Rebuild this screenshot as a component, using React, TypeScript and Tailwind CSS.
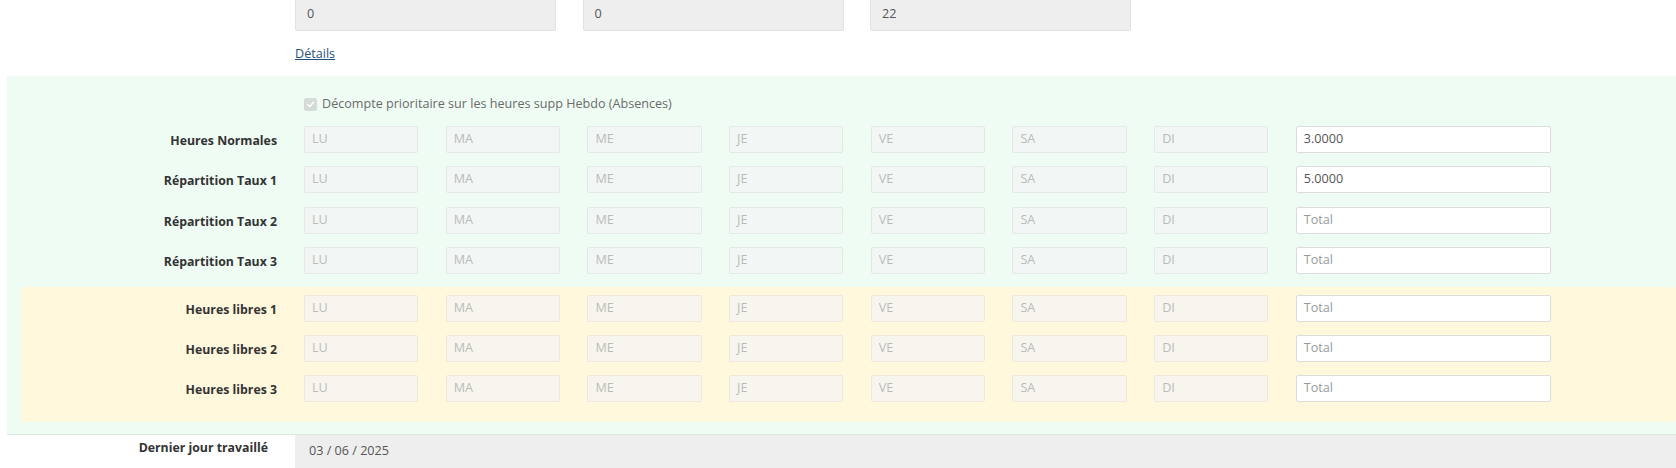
import React from "react";

const DAYS = ["LU", "MA", "ME", "JE", "VE", "SA", "DI"];

type RowProps = {
  label: string;
  total?: string;
  tone: "green" | "yellow";
  labelWidth: string;
};

function DayRow({ label, total, tone, labelWidth }: RowProps) {
  const dayCls =
    tone === "green"
      ? "bg-[#f2f6f4] border-[#e4e8e6]"
      : "bg-[#f8f5ee] border-[#ece8de]";
  return (
    <div className="flex items-center h-[27px]">
      <div
        className={`${labelWidth} shrink-0 pr-[27px] pt-[3px] text-right font-bold text-[12.3px] text-[#333] leading-none`}
      >
        {label}
      </div>
      <div className="flex gap-[27.4px]">
        {DAYS.map((d) => (
          <div
            key={d}
            className={`w-[114.3px] h-[27px] border rounded-[2px] ${dayCls} flex items-center pl-[7px] text-[12.6px] text-[#b9bcbb]`}
          >
            {d}
          </div>
        ))}
        <div className="w-[255px] h-[27px] border border-[#dcdcdc] rounded-[2px] bg-white flex items-center pl-[7px] text-[12.6px]">
          {total ? (
            <span className="text-[#555]">{total}</span>
          ) : (
            <span className="text-[#9a9a9a]">Total</span>
          )}
        </div>
      </div>
    </div>
  );
}

export default function App() {
  return (
    <div
      className="w-[1676px] h-[468px] overflow-hidden bg-white text-[#555]"
      style={{ fontFamily: '"Open Sans", "Noto Sans", sans-serif' }}
    >
      {/* counters row */}
      <div className="flex gap-[26.5px] pl-[295px] -mt-[3px]">
        {["0", "0", "22"].map((v, i) => (
          <div
            key={i}
            className="w-[261px] h-[34px] bg-[#eeeeee] border border-[#e2e2e2] rounded-[2px] flex items-center pl-[11px] text-[12.6px] text-[#555]"
          >
            {v}
          </div>
        ))}
      </div>

      <div className="pl-[295px] mt-[15px] h-[16px] flex items-center">
        <a href="#" className="text-[12.6px] text-[#1f4f7d] underline">
          Détails
        </a>
      </div>

      {/* weekly hours section */}
      <div className="ml-[7px] mt-[14px] bg-[#effcf3] border-b border-[#e0e6e2] pt-[22px] pb-[12px]">
        <div className="flex items-center pl-[297px] h-[13px]">
          <div className="w-[13px] h-[13px] rounded-[2px] bg-[#d5dbd8] flex items-center justify-center">
            <svg width="9" height="9" viewBox="0 0 10 10" fill="none">
              <path
                d="M2 5.2 L4.2 7.3 L8.2 2.6"
                stroke="#ffffff"
                strokeWidth="1.6"
                strokeLinecap="round"
                strokeLinejoin="round"
              />
            </svg>
          </div>
          <span className="ml-[5px] text-[12.6px] text-[#6b6b6b] leading-none">
            Décompte prioritaire sur les heures supp Hebdo (Absences)
          </span>
        </div>

        <div className="flex flex-col gap-[13.4px] mt-[15px]">
          <DayRow label="Heures Normales" total="3.0000" tone="green" labelWidth="w-[297px]" />
          <DayRow label="Répartition Taux 1" total="5.0000" tone="green" labelWidth="w-[297px]" />
          <DayRow label="Répartition Taux 2" tone="green" labelWidth="w-[297px]" />
          <DayRow label="Répartition Taux 3" tone="green" labelWidth="w-[297px]" />
        </div>

        <div className="ml-[14px] mt-[13px] bg-[#fff8dc] rounded-[3px] pt-[7.5px] pb-[20px]">
          <div className="flex flex-col gap-[13px]">
            <DayRow label="Heures libres 1" tone="yellow" labelWidth="w-[283px]" />
            <DayRow label="Heures libres 2" tone="yellow" labelWidth="w-[283px]" />
            <DayRow label="Heures libres 3" tone="yellow" labelWidth="w-[283px]" />
          </div>
        </div>
      </div>

      {/* last worked day */}
      <div className="flex">
        <div className="w-[295px] shrink-0 pr-[27px] pt-[4px] text-right font-bold text-[12.3px] text-[#333]">
          Dernier jour travaillé
        </div>
        <div className="flex-1 h-[34px] bg-[#eeeeee] flex items-center pl-[14px] text-[12.6px] text-[#555]">
          03 / 06 / 2025
        </div>
      </div>
    </div>
  );
}
